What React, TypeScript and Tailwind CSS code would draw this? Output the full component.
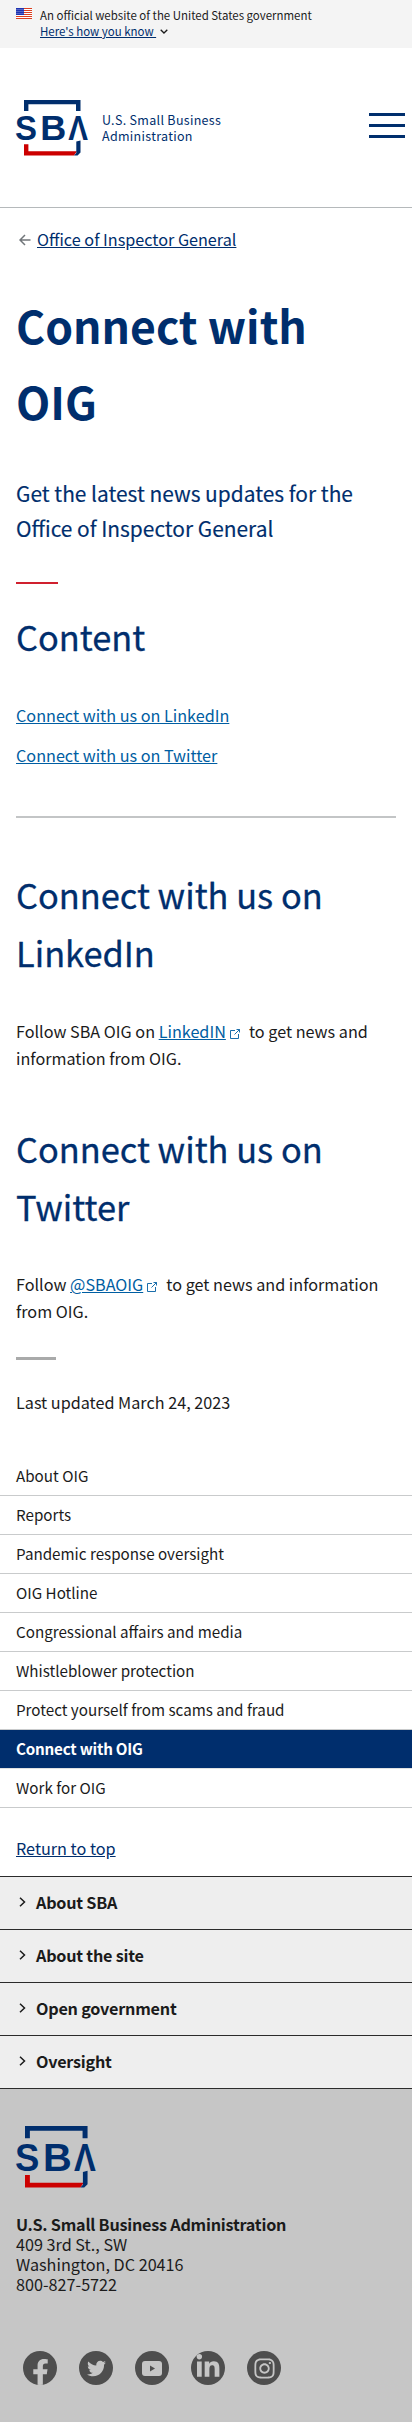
import type { ReactNode } from "react";
import { FaTwitter, FaLinkedinIn, FaFacebookF, FaInstagram } from "react-icons/fa";

function Logo({ className }: { className: string }) {
  return (
    <svg viewBox="0 0 72 56" className={className} role="img" aria-label="SBA">
      <path d="M8 11V0H64.500V11H60V4.200H12.400V11Z" fill="#002e6d" />
      <path d="M8 44.300H12.400V51.300H61L58 55.500H8Z" fill="#cc0000" />
      <path d="M64.500 40.500V52.500L61.500 55.500H58L60.300 53V41.500Z" fill="#002e6d" />
      <g fill="#002e6d" fontFamily="Liberation Sans" fontWeight="700" fontSize="35.500">
        <text x="-1" y="40.300" textLength="22" lengthAdjust="spacingAndGlyphs">S</text>
        <text x="24.300" y="40.300" textLength="26" lengthAdjust="spacingAndGlyphs">B</text>
        <text x="52.200" y="40.300" textLength="19.700" lengthAdjust="spacingAndGlyphs">Λ</text>
      </g>
    </svg>
  );
}

function Flag() {
  return (
    <svg viewBox="0 0 16 11" className="mt-px h-[11px] w-4 shrink-0">
      <rect width="16" height="11" fill="#fff" />
      {[0, 2, 4, 6, 8, 10].map((y) => (
        <rect key={y} y={y} width="16" height="1" fill="#db3e1f" />
      ))}
      <rect width="8" height="7" fill="#1e33b1" />
      {[1, 3, 5].map((y) =>
        [1, 3, 5, 7].map((x) => <circle key={`${x}-${y}`} cx={x} cy={y + 0.5} r="0.45" fill="#fff" />)
      )}
    </svg>
  );
}

function External() {
  return (
    <svg viewBox="0 0 10 10" className="mr-[5.500px] ml-1 inline h-[10px] w-[10px] align-[-1px]" fill="none" stroke="#005ea2" strokeWidth="0.900">
      <path d="M5 1.500H0.500V9.500H8.500V5" />
      <path d="M6.500 0.500H9.500V3.500M9.500 0.500L4.500 5.500" />
    </svg>
  );
}

function Social({ children }: { children: ReactNode }) {
  return (
    <span className="flex size-[34px] items-center justify-center overflow-hidden rounded-full bg-[#4e4e4e] text-[#c6c6c6]">
      {children}
    </span>
  );
}

function SectionHeading({ className, children }: { className: string; children: ReactNode }) {
  return (
    <h2 className={`text-[34.400px] leading-[58px] text-[#002e6d] [-webkit-text-stroke:0.3px_#002e6d] ${className}`}>
      {children}
    </h2>
  );
}

const pages = [
  "About OIG",
  "Reports",
  "Pandemic response oversight",
  "OIG Hotline",
  "Congressional affairs and media",
  "Whistleblower protection",
  "Protect yourself from scams and fraud",
  "Connect with OIG",
  "Work for OIG",
];

const sections = ["About SBA", "About the site", "Open government", "Oversight"];

export default function App() {
  return (
    <div className="h-[2423px] w-full bg-white font-['Noto_Sans_CJK_SC','Noto_Sans',sans-serif] text-[16.200px] leading-[27px] text-[#1b1b1b]">
      <div className="flex h-12 gap-2 bg-[#f4f4f4] px-4 pt-[7px] text-[11.460px] leading-4">
        <Flag />
        <div>
          <p>An official website of the United States government</p>
          <p className="flex items-center text-[#002e6d]">
            <span className="whitespace-pre underline">{"Here's how you know "}</span>
            <svg viewBox="0 0 8 5" className="ml-1 h-[5px] w-2" fill="none" stroke="#1b1b1b" strokeWidth="1.300">
              <path d="M0.700 0.700L4 4L7.300 0.700" />
            </svg>
          </p>
        </div>
      </div>

      <header className="flex h-40 items-center justify-between border-b border-[#b5b9bb] pr-[7px] pl-4">
        <div className="flex items-center">
          <Logo className="h-14 w-[72px] overflow-visible" />
          <p className="ml-[14px] text-[12.500px] leading-4 tracking-[0.310px] text-[#002e6d]">
            U.S. Small Business
            <br />
            Administration
          </p>
        </div>
        <div className="mb-[5px] flex flex-col gap-2">
          <i className="h-[3px] w-9 bg-[#002e6d]" />
          <i className="h-[3px] w-9 bg-[#002e6d]" />
          <i className="h-[3px] w-9 bg-[#002e6d]" />
        </div>
      </header>

      <main className="px-4">
        <p className="flex items-center pt-[18px]">
          <svg viewBox="0 0 12 12" className="mr-[6px] ml-[3px] h-3 w-3" fill="none" stroke="#71767a" strokeWidth="1.500">
            <path d="M11.500 6H1.500M6 1L1 6L6 11" />
          </svg>
          <a className="text-[#002e6d] underline">Office of Inspector General</a>
        </p>
        <h1 className="mt-[34px] text-[44.500px] leading-[76px] font-bold text-[#002e6d]">
          Connect with
          <br />
          OIG
        </h1>
        <p className="mt-[37px] text-[20.900px] leading-[35px] text-[#002e6d] [-webkit-text-stroke:0.15px_#002e6d]">
          Get the latest news updates for the
          <br />
          Office of Inspector General
        </p>
        <div className="mt-[36px] h-[2px] w-[42px] bg-[#d0202e]" />
        <SectionHeading className="mt-[23px]">Content</SectionHeading>
        <p className="mt-[37px] text-[#005ea2] underline">Connect with us on LinkedIn</p>
        <p className="mt-[13px] text-[#005ea2] underline">Connect with us on Twitter</p>
        <hr className="mt-[47px] border-t-2 border-[#c3c5c6]" />
        <SectionHeading className="mt-[47px]">
          Connect with us on
          <br />
          LinkedIn
        </SectionHeading>
        <p className="mt-[37px]">
          Follow SBA OIG on <a className="text-[#005ea2] underline">LinkedIN</a>
          <External /> to get news and
          <br />
          information from OIG.
        </p>
        <SectionHeading className="mt-[47px]">
          Connect with us on
          <br />
          Twitter
        </SectionHeading>
        <p className="mt-[36px]">
          Follow <a className="text-[#005ea2] underline">@SBAOIG</a>
          <External /> to get news and information
          <br />
          from OIG.
        </p>
        <div className="mt-[32px] h-[3px] w-10 bg-[#a9aaaa]" />
        <p className="mt-[29px]">Last updated March 24, 2023</p>
      </main>

      <nav className="mt-[41px] text-[15.200px] leading-[37px]">
        {pages.map((label) => (
          <a
            key={label}
            className={
              label === "Connect with OIG"
                ? "block h-[39px] border-b border-[#dfe1e2] bg-[#002e6d] px-4 font-bold tracking-[-0.220px] text-white"
                : "block h-[39px] border-b border-[#c9cbcc] px-4"
            }
          >
            {label}
          </a>
        ))}
      </nav>
      <p className="mt-[27px] px-4 text-[#002e6d] underline">Return to top</p>

      <footer className="mt-[14px]">
        {sections.map((label) => (
          <div key={label} className="flex h-[53px] items-center border-t border-[#2b2b2b] bg-[#eeeeee] pb-[2px] pl-[19px] font-bold tracking-[-0.230px]">
            <svg viewBox="0 0 7 10" className="mr-[10px] h-[10px] w-[7px]" fill="none" stroke="#1b1b1b" strokeWidth="1.500">
              <path d="M1 0.700L5.500 5L1 9.300" />
            </svg>
            {label}
          </div>
        ))}
        <div className="h-[334px] border-t border-[#2b2b2b] bg-[#c6c6c6] px-4 pt-[37px]">
          <Logo className="h-[62px] w-20 overflow-visible" />
          <address className="mt-[26px] leading-5 not-italic">
            <b className="tracking-[-0.230px]">U.S. Small Business Administration</b>
            <br />
            409 3rd St., SW
            <br />
            Washington, DC 20416
            <br />
            800-827-5722
          </address>
          <div className="mt-[57px] ml-[7px] flex gap-[22px]">
            <Social><FaFacebookF className="mt-[9px] size-[27px] shrink-0" /></Social>
            <Social><FaTwitter className="size-[19px]" /></Social>
            <Social>
              <svg viewBox="0 0 20 15" className="h-[15px] w-5">
                <rect width="20" height="15" rx="3" fill="currentColor" />
                <path d="M8 4.500V10.500L13 7.500Z" fill="#4e4e4e" />
              </svg>
            </Social>
            <Social><FaLinkedinIn className="mb-[2px] size-[26px]" /></Social>
            <Social><FaInstagram className="size-[23px]" /></Social>
          </div>
        </div>
      </footer>
    </div>
  );
}
